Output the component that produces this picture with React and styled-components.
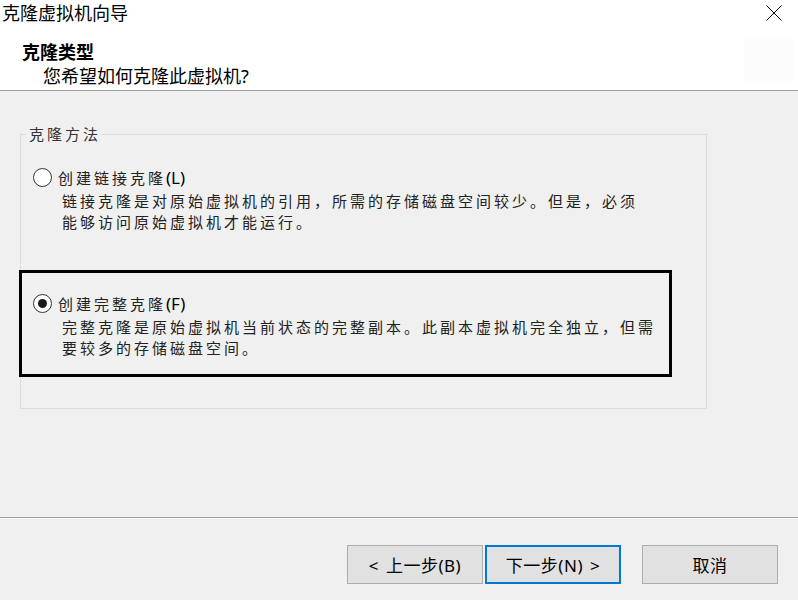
import React from "react";
import styled, { createGlobalStyle } from "styled-components";

const GlobalStyle = createGlobalStyle`
  html, body { margin: 0; padding: 0; background: #f0f0f0; }
  * { box-sizing: border-box; }
`;

const CJK = `"Noto Sans", "Noto Sans CJK SC", sans-serif`;

const Window = styled.div`
  width: 798px;
  height: 600px;
  display: flex;
  flex-direction: column;
  font-family: ${CJK};
  color: #000;
  background: #f0f0f0;
  overflow: hidden;
`;

const Header = styled.header`
  height: 91px;
  flex: none;
  background: #fff;
  border-bottom: 1px solid #a0a0a0;
  display: flex;
  flex-direction: column;
`;

const TitleBar = styled.div`
  height: 26px;
  display: flex;
  align-items: flex-start;
  justify-content: space-between;
`;

const WindowTitle = styled.div`
  font-size: 18px;
  line-height: 26px;
  padding-left: 2px;
`;

const CloseButton = styled.svg`
  width: 16px;
  height: 16px;
  margin: 5px 16px 0 0;
`;

const Banner = styled.div`
  display: flex;
  justify-content: space-between;
  align-items: flex-start;
`;

const BannerText = styled.div`
  display: flex;
  flex-direction: column;
  padding-top: 14px;
`;

const PageTitle = styled.div`
  font-size: 18px;
  line-height: 24px;
  font-weight: 700;
  padding-left: 22px;
`;

const PageSubtitle = styled.div`
  font-size: 18px;
  line-height: 24px;
  padding-left: 43px;
`;

const BannerIcon = styled.div`
  width: 49px;
  height: 48px;
  margin: 10px 5px 0 0;
  background: #fcfcfc;
`;

const Body = styled.main`
  flex: 1;
  padding: 33px 0 0 20px;
`;

const Group = styled.fieldset`
  width: 687px;
  margin: 0;
  padding: 0 0 31px 0;
  border: 1px solid #dcdcdc;
  min-width: 0;
`;

const Legend = styled.legend`
  font-size: 15px;
  line-height: 20px;
  letter-spacing: 3px;
  color: #333;
  margin-left: 5px;
  padding: 0 0 0 3px;
`;

const Option = styled.div`
  width: 653px;
  height: 107px;
  margin-left: -2px;
  margin-top: ${(p) => (p.$first ? "0" : "19px")};
  border: 3px solid ${(p) => (p.$focused ? "#000" : "transparent")};
  padding: 20px 0 0 11px;
`;

const OptionLabel = styled.label`
  display: flex;
  align-items: center;
  height: 21px;
  font-size: 15px;
  letter-spacing: 3px;
  color: #222;
`;

const Radio = styled.span`
  width: 19px;
  height: 19px;
  flex: none;
  border-radius: 50%;
  border: 1px solid #333;
  background: #fff;
  margin-right: 6px;
  display: flex;
  align-items: center;
  justify-content: center;
  &::after {
    content: "";
    width: 9px;
    height: 9px;
    border-radius: 50%;
    background: ${(p) => (p.$checked ? "#1a1a1a" : "transparent")};
  }
`;

const Mnemonic = styled.span`
  font-size: 17px;
  letter-spacing: 0;
  color: #000;
`;

const Description = styled.p`
  margin: 3px 0 0 29px;
  font-size: 15px;
  line-height: 21px;
  letter-spacing: 3px;
  color: #222;
  white-space: pre-line;
`;

const Footer = styled.footer`
  height: 83px;
  flex: none;
  border-top: 1px solid #a0a0a0;
  box-shadow: inset 0 1px 0 #fff;
  display: flex;
  justify-content: flex-end;
  align-items: flex-start;
  padding: 27px 20px 0 0;
`;

const NavGroup = styled.div`
  display: flex;
  gap: 2px;
  margin-right: 21px;
`;

const Button = styled.button`
  width: 136px;
  height: 39px;
  margin: 0;
  padding: 0;
  background: #e1e1e1;
  border: ${(p) => (p.$default ? "2px solid #0078d7" : "1px solid #adadad")};
  font-family: ${CJK};
  font-size: 17px;
  letter-spacing: 0.5px;
  word-spacing: 2px;
  color: #000;
  display: flex;
  align-items: center;
  justify-content: center;
`;

export default function App() {
  return (
    <Window>
      <GlobalStyle />
      <Header>
        <TitleBar>
          <WindowTitle>克隆虚拟机向导</WindowTitle>
          <CloseButton viewBox="0 0 16 16">
            <path d="M0.5 0.5 L15.5 15.5 M15.5 0.5 L0.5 15.5" stroke="#000" strokeWidth="1" fill="none" />
          </CloseButton>
        </TitleBar>
        <Banner>
          <BannerText>
            <PageTitle>克隆类型</PageTitle>
            <PageSubtitle>您希望如何克隆此虚拟机?</PageSubtitle>
          </BannerText>
          <BannerIcon />
        </Banner>
      </Header>
      <Body>
        <Group>
          <Legend>克隆方法</Legend>
          <Option $first>
            <OptionLabel>
              <Radio />
              创建链接克隆<Mnemonic>(L)</Mnemonic>
            </OptionLabel>
            <Description>
              {"链接克隆是对原始虚拟机的引用，所需的存储磁盘空间较少。但是，必须\n能够访问原始虚拟机才能运行。"}
            </Description>
          </Option>
          <Option $focused>
            <OptionLabel>
              <Radio $checked />
              创建完整克隆<Mnemonic>(F)</Mnemonic>
            </OptionLabel>
            <Description>
              {"完整克隆是原始虚拟机当前状态的完整副本。此副本虚拟机完全独立，但需\n要较多的存储磁盘空间。"}
            </Description>
          </Option>
        </Group>
      </Body>
      <Footer>
        <NavGroup>
          <Button>&lt; 上一步(B)</Button>
          <Button $default>下一步(N) &gt;</Button>
        </NavGroup>
        <Button>取消</Button>
      </Footer>
    </Window>
  );
}
